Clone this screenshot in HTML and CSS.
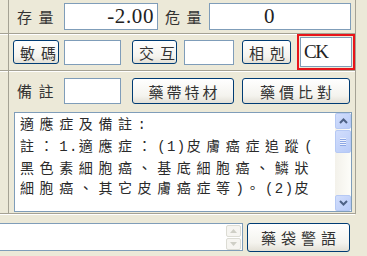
FILE: index.html
```html
<!DOCTYPE html>
<html lang="zh-TW">
<head>
    <meta charset="UTF-8">
    <title>藥品資料</title>
    <link rel="stylesheet" href="styles.css">
</head>
<body>
    <div class="sheet">
        <div class="row r1">
            <div class="stub"></div>
            <div class="cell c1">
                <span class="lbl lbl-qty">存量</span>
                <input class="box box-stock" value="-2.00">
                <span class="lbl lbl-safe">危量</span>
                <input class="box box-safe" value="0">
            </div>
        </div>
        <div class="row r2">
            <div class="stub"></div>
            <div class="cell c2">
                <button class="btn btn-s">敏碼</button>
                <input class="box box-a" value="">
                <button class="btn btn-s2">交互</button>
                <input class="box box-b" value="">
                <button class="btn btn-s3">相剋</button>
                <input class="box box-ck" value="CK">
            </div>
        </div>
        <div class="row r3">
            <div class="stub"></div>
            <div class="cell c3">
                <div class="line">
                    <span class="lbl lbl-note">備註</span>
                    <input class="box box-note" value="">
                    <button class="btn btn-w1">藥帶特材</button>
                    <button class="btn btn-w2">藥價比對</button>
                </div>
                <div class="memo">
                    <div class="memo-text">適應症及備註<span class="en">:</span><br>註：<span class="en">1.</span>適應症：<span class="en">(1)</span>皮膚癌症追蹤<span class="en">(</span>黑色素細胞癌、基底細胞癌、鱗狀細胞癌、其它皮膚癌症等<span class="en">)</span>。<span class="en">(2)</span>皮</div>
                    <div class="sbar">
                        <div class="sb-btn">
                            <svg width="9" height="6" viewBox="0 0 9 6"><path d="M1 5 L4.5 1.5 L8 5" fill="none" stroke="#4d6185" stroke-width="2"/></svg>
                        </div>
                        <div class="sb-thumb">
                            <i></i><i></i><i></i><i></i>
                        </div>
                        <div class="sb-track"></div>
                        <div class="sb-btn">
                            <svg width="9" height="6" viewBox="0 0 9 6"><path d="M1 1 L4.5 4.5 L8 1" fill="none" stroke="#4d6185" stroke-width="2"/></svg>
                        </div>
                    </div>
                </div>
            </div>
        </div>
    </div>
    <div class="bottom">
        <div class="combo">
            <div class="combo-text"></div>
            <div class="spin">
                <div class="spin-btn">
                    <svg width="7" height="4" viewBox="0 0 7 4"><path d="M0 4 L3.5 0 L7 4 Z" fill="#cfcfc6"/></svg>
                </div>
                <div class="spin-btn">
                    <svg width="7" height="4" viewBox="0 0 7 4"><path d="M0 0 L3.5 4 L7 0 Z" fill="#cfcfc6"/></svg>
                </div>
            </div>
        </div>
        <button class="btn btn-bag">藥袋警語</button>
    </div>
</body>
</html>
```

FILE: styles.css
```css
body {
    margin: 0;
    width: 367px;
    height: 256px;
    overflow: hidden;
    background: #ece9d8;
    font-family: "Noto Sans CJK TC", sans-serif;
    color: #222;
}
.sheet {
    width: 355px;
    border-right: 1px solid #a5a294;
}
.row {
    display: flex;
    border-bottom: 1px solid #a5a294;
    box-shadow: 0 1px 0 #fff;
}
.r1 { height: 33px; }
.r2 { height: 36px; }
.r3 { height: 142px; }
.stub {
    flex: none;
    width: 8px;
    border-right: 1px solid #a5a294;
}
.cell {
    flex: 1;
    display: flex;
    align-items: center;
}
.c1 { padding-left: 8px; }
.c2 { padding-left: 4px; }
.c3 {
    flex-direction: column;
    align-items: flex-start;
    padding-top: 7px;
}

.lbl {
    font-size: 15px;
    letter-spacing: 6.5px;
    line-height: 20px;
    white-space: nowrap;
    color: #333;
}
.lbl-qty { width: 47px; }
.lbl-safe { width: 44px; padding-left: 7px; }
.lbl-note { width: 47px; margin-left: 8px; }

.box {
    box-sizing: border-box;
    margin: 0;
    border: 1px solid #7f9db9;
    background: #fff;
    font-family: "Liberation Serif", "Noto Sans CJK TC", serif;
    font-size: 21px;
    color: #222;
    padding: 0 3px;
    outline: none;
}
.box-stock {
    width: 94px;
    height: 27px;
    text-align: right;
    letter-spacing: 0.6px;
}
.box-safe {
    width: 142px;
    height: 27px;
    padding-left: 54px;
}
.box-a { width: 57px; height: 25px; margin-left: 5px; }
.box-b { width: 50px; height: 25px; margin-left: 7px; }
.box-ck {
    width: 52px;
    height: 30px;
    margin-left: 9px;
    font-size: 19px;
    letter-spacing: -1.5px;
    outline: 2px solid #e8141a;
    outline-offset: 1px;
}
.box-note { width: 57px; height: 26px; }

.btn {
    box-sizing: border-box;
    margin: 0;
    padding: 0 0 0 6px;
    border: 1px solid #003c74;
    border-radius: 3px;
    background: linear-gradient(#ffffff, #f4f3ee 70%, #e3e0d6);
    font-family: "Noto Sans CJK TC", sans-serif;
    font-size: 15px;
    letter-spacing: 6px;
    color: #333;
    white-space: nowrap;
}
.btn-s { width: 46px; height: 24px; }
.btn-s2 { width: 45px; height: 24px; margin-left: 11px; }
.btn-s3 { width: 49px; height: 24px; margin-left: 8px; }
.btn-w1 { width: 102px; height: 26px; margin-left: 11px; letter-spacing: 3px; padding-left: 3px; }
.btn-w2 { width: 108px; height: 26px; margin-left: 8px; letter-spacing: 4px; padding-left: 4px; }

.line {
    display: flex;
    align-items: center;
    height: 26px;
}
.memo {
    box-sizing: border-box;
    display: flex;
    width: 338px;
    height: 100px;
    margin: 8px 0 0 5px;
    border: 1px solid #7f9db9;
    background: #fff;
}
.memo-text {
    flex: 1;
    padding: 0 14px 0 5px;
    font-size: 14px;
    letter-spacing: 5.6px;
    line-height: 20px;
    line-break: anywhere;
    overflow: hidden;
    color: #2a2a2a;
}
.memo-text .en {
    font-family: "Liberation Mono", monospace;
    font-size: 14px;
    letter-spacing: 1.4px;
}
.sbar {
    flex: none;
    width: 16px;
    display: flex;
    flex-direction: column;
    background: linear-gradient(90deg, #f3f1ea, #fdfdf9);
}
.sb-btn, .sb-thumb {
    box-sizing: border-box;
    height: 16px;
    border: 1px solid #b6c9f4;
    border-radius: 2px;
    background: linear-gradient(135deg, #d2defc, #b8cbf8);
    display: flex;
    align-items: center;
    justify-content: center;
}
.sb-thumb {
    height: 23px;
    margin-top: 1px;
    flex-direction: column;
    gap: 1px;
}
.sb-thumb i {
    display: block;
    width: 6px;
    height: 1px;
    background: #eef2fd;
    box-shadow: 0 1px 0 #8ca7e4;
}
.sb-track { flex: 1; }

.bottom {
    display: flex;
    align-items: flex-start;
    padding-top: 9px;
}
.combo {
    box-sizing: border-box;
    display: flex;
    width: 245px;
    height: 28px;
    margin-left: -2px;
    border: 1px solid #7f9db9;
    background: #fff;
}
.combo-text { flex: 1; }
.spin {
    display: flex;
    flex-direction: column;
    gap: 1px;
    padding: 1px 1px 0 0;
}
.spin-btn {
    box-sizing: border-box;
    width: 15px;
    height: 12px;
    border: 1px solid #dcdcd4;
    border-radius: 2px;
    background: #f6f5f1;
    display: flex;
    align-items: center;
    justify-content: center;
}
.btn-bag {
    width: 103px;
    height: 29px;
    margin-left: 4px;
    letter-spacing: 5px;
    padding-left: 5px;
}
```
